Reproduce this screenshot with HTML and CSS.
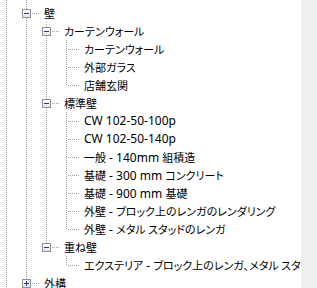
FILE: index.html
```html
<!DOCTYPE html>
<html lang="ja">
<head>
  <meta charset="UTF-8" />
  <title>プロジェクト ブラウザ</title>
  <link rel="stylesheet" href="styles.css">
</head>
<body>
  <div class="panel">
    <div class="tree">
      <!-- row above the view, only its lines show -->
      <div class="row">
        <span class="col line"></span>
        <span class="col line"></span>
      </div>

      <div class="row">
        <span class="col line"></span>
        <span class="col tee"><span class="box minus"></span></span>
        <span class="text ja">壁</span>
      </div>

      <div class="row">
        <span class="col line"></span>
        <span class="col line"></span>
        <span class="col tee"><span class="box minus"></span></span>
        <span class="text ja">カーテンウォール</span>
      </div>
      <div class="row">
        <span class="col line"></span>
        <span class="col line"></span>
        <span class="col line"></span>
        <span class="col tee"></span>
        <span class="text ja">カーテンウォール</span>
      </div>
      <div class="row">
        <span class="col line"></span>
        <span class="col line"></span>
        <span class="col line"></span>
        <span class="col tee"></span>
        <span class="text ja">外部ガラス</span>
      </div>
      <div class="row">
        <span class="col line"></span>
        <span class="col line"></span>
        <span class="col line"></span>
        <span class="col elbow"></span>
        <span class="text ja">店舗玄関</span>
      </div>

      <div class="row">
        <span class="col line"></span>
        <span class="col line"></span>
        <span class="col tee"><span class="box minus"></span></span>
        <span class="text ja">標準壁</span>
      </div>
      <div class="row">
        <span class="col line"></span>
        <span class="col line"></span>
        <span class="col line"></span>
        <span class="col tee"></span>
        <span class="text">CW 102-50-100p</span>
      </div>
      <div class="row">
        <span class="col line"></span>
        <span class="col line"></span>
        <span class="col line"></span>
        <span class="col tee"></span>
        <span class="text">CW 102-50-140p</span>
      </div>
      <div class="row">
        <span class="col line"></span>
        <span class="col line"></span>
        <span class="col line"></span>
        <span class="col tee"></span>
        <span class="text"><span class="ja">一般</span> - 140mm <span class="ja">組積造</span></span>
      </div>
      <div class="row">
        <span class="col line"></span>
        <span class="col line"></span>
        <span class="col line"></span>
        <span class="col tee"></span>
        <span class="text"><span class="ja">基礎</span> - 300 mm <span class="ja">コンクリート</span></span>
      </div>
      <div class="row">
        <span class="col line"></span>
        <span class="col line"></span>
        <span class="col line"></span>
        <span class="col tee"></span>
        <span class="text"><span class="ja">基礎</span> - 900 mm <span class="ja">基礎</span></span>
      </div>
      <div class="row">
        <span class="col line"></span>
        <span class="col line"></span>
        <span class="col line"></span>
        <span class="col tee"></span>
        <span class="text"><span class="ja">外壁</span> - <span class="ja">ブロック上のレンガのレンダリング</span></span>
      </div>
      <div class="row">
        <span class="col line"></span>
        <span class="col line"></span>
        <span class="col line"></span>
        <span class="col elbow"></span>
        <span class="text"><span class="ja">外壁</span> - <span class="ja">メタル スタッドのレンガ</span></span>
      </div>

      <div class="row">
        <span class="col line"></span>
        <span class="col line"></span>
        <span class="col elbow"><span class="box minus"></span></span>
        <span class="text ja">重ね壁</span>
      </div>
      <div class="row">
        <span class="col line"></span>
        <span class="col line"></span>
        <span class="col"></span>
        <span class="col elbow"></span>
        <span class="text"><span class="ja">エクステリア</span> - <span class="ja">ブロック上のレンガ、メタル スタッド</span></span>
      </div>

      <div class="row">
        <span class="col line"></span>
        <span class="col tee"><span class="box plus"></span></span>
        <span class="text ja">外構</span>
      </div>
    </div>
    <div class="scroll-track"></div>
  </div>
</body>
</html>
```

FILE: styles.css
```css
html, body {
  margin: 0;
  padding: 0;
  background: #ffffff;
  overflow: hidden;
}

body {
  font-family: "Noto Sans", "Noto Sans CJK JP", sans-serif;
  font-size: 12px;
  color: #000;
}

.panel {
  display: flex;
  width: 317px;
  height: 288px;
}

.tree {
  flex: 1;
  overflow: hidden;
  margin-top: -14px;
}

.scroll-track {
  width: 16px;
  background: #f0f0f0;
}

.row {
  display: flex;
  height: 18px;
  align-items: center;
  white-space: nowrap;
}

.col {
  position: relative;
  flex: 0 0 20px;
  height: 18px;
}

/* dotted guide lines */
.line,
.tee,
.elbow {
  background-image: repeating-linear-gradient(to bottom, #a0a0a0 0 1px, transparent 1px 2px);
  background-repeat: no-repeat;
  background-size: 1px 100%;
  background-position: 6px 0;
}

.elbow {
  background-size: 1px 10px;
}

.tee::after,
.elbow::after {
  content: "";
  position: absolute;
  left: 8px;
  top: 9px;
  width: 12px;
  height: 1px;
  background-image: repeating-linear-gradient(to right, #a0a0a0 0 1px, transparent 1px 2px);
}

/* expand / collapse button */
.box {
  position: absolute;
  left: 2px;
  top: 5px;
  width: 7px;
  height: 7px;
  border: 1px solid #919191;
  background: linear-gradient(#ffffff, #e6e6e6);
  z-index: 1;
}

.box::before,
.box.plus::after {
  content: "";
  position: absolute;
  left: 1px;
  top: 3px;
  width: 5px;
  height: 1px;
  background: #1c3f94;
}

.box.plus::after {
  left: 3px;
  top: 1px;
  width: 1px;
  height: 5px;
}

.tee:has(.box)::after,
.elbow:has(.box)::after {
  left: 10px;
  width: 10px;
}

.text {
  padding-left: 4px;
  line-height: 18px;
}

.ja {
  font-family: "Noto Sans CJK JP", sans-serif;
  font-size: 11px;
  font-feature-settings: "palt";
}
```
